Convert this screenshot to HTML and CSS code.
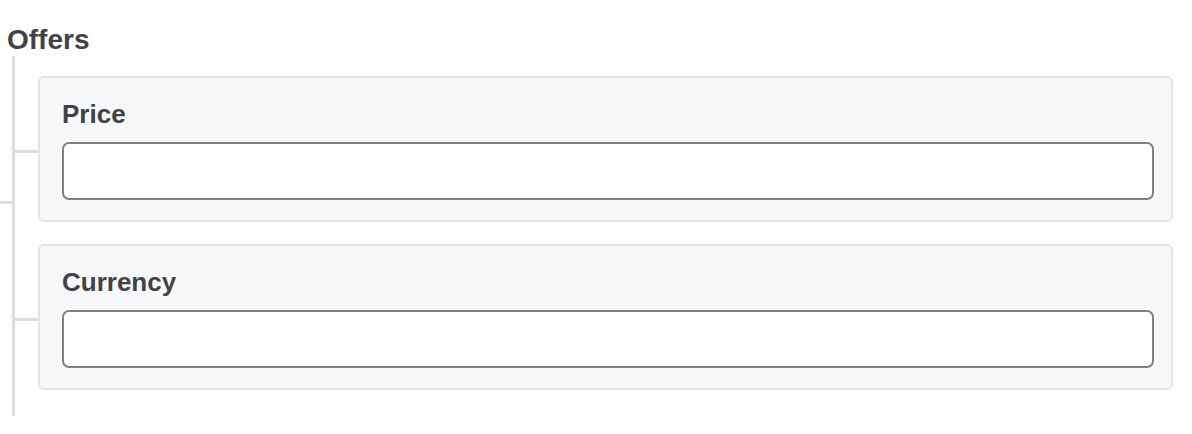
FILE: index.html
```html
<!DOCTYPE html>
<html lang="en">
<head>
<meta charset="utf-8">
<title>Offers</title>
<link rel="stylesheet" href="styles.css">
</head>
<body>
<div class="group">
  <div class="group-title">Offers</div>
  <div class="children">
    <div class="row">
      <div class="connector"></div>
      <div class="card">
        <label class="label" for="price">Price</label>
        <input class="input" id="price" type="text">
      </div>
    </div>
    <div class="row">
      <div class="connector"></div>
      <div class="card">
        <label class="label" for="currency">Currency</label>
        <input class="input" id="currency" type="text">
      </div>
    </div>
  </div>
</div>
</body>
</html>
```

FILE: styles.css
```css
html, body {
  margin: 0;
  padding: 0;
  background: #ffffff;
}
body {
  font-family: "Liberation Sans", Arial, sans-serif;
  color: #424245;
  overflow: hidden;
}
.group {
  position: relative;
  padding-top: 24px;
}
.group::before {
  content: "";
  position: absolute;
  left: 0;
  top: 201px;
  width: 12px;
  height: 3px;
  background: #dedede;
}
.group-title {
  font-size: 28px;
  line-height: 32px;
  font-weight: bold;
  padding-left: 7px;
}
.children {
  margin-left: 12px;
  border-left: 3px solid #dedede;
  padding-top: 20px;
  padding-bottom: 26px;
  display: flex;
  flex-direction: column;
  gap: 22px;
  width: 1158px;
}
.row {
  display: flex;
  align-items: center;
}
.connector {
  width: 23px;
  height: 3px;
  background: #dedede;
  margin-top: 4px;
  flex: none;
}
.card {
  flex: none;
  width: 1135px;
  box-sizing: border-box;
  border: 2px solid #e3e4e6;
  border-radius: 6px;
  background: #f7f8fa;
  padding: 21px 17px 20px 22px;
  display: flex;
  flex-direction: column;
}
.label {
  font-size: 26px;
  line-height: 30px;
  font-weight: bold;
  margin-bottom: 13px;
}
.input {
  box-sizing: border-box;
  height: 58px;
  width: 100%;
  border: 2px solid #7f7f7f;
  border-radius: 7px;
  background: #ffffff;
  margin: 0;
  padding: 0 12px;
  font: inherit;
  outline: none;
}
```
